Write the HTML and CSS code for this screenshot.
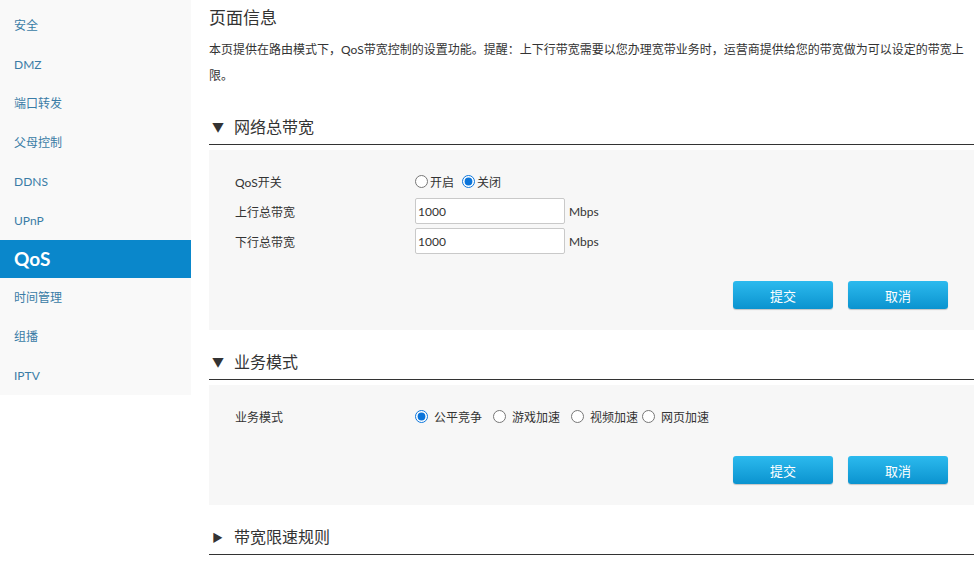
FILE: index.html
```html
<!DOCTYPE html>
<html lang="zh-CN">
<head>
<meta charset="utf-8">
<title>QoS</title>
<link rel="stylesheet" href="styles.css">
</head>
<body>
<div class="page">
  <nav class="sidebar">
    <a class="nav-item">安全</a>
    <a class="nav-item">DMZ</a>
    <a class="nav-item">端口转发</a>
    <a class="nav-item">父母控制</a>
    <a class="nav-item">DDNS</a>
    <a class="nav-item">UPnP</a>
    <a class="nav-item active">QoS</a>
    <a class="nav-item">时间管理</a>
    <a class="nav-item">组播</a>
    <a class="nav-item">IPTV</a>
  </nav>
  <main class="main">
    <h1 class="title">页面信息</h1>
    <p class="desc">本页提供在路由模式下，QoS带宽控制的设置功能。提醒：上下行带宽需要以您办理宽带业务时，运营商提供给您的带宽做为可以设定的带宽上限。</p>

    <div class="section-head first"><span class="arrow">▼</span>网络总带宽</div>
    <div class="panel">
      <div class="row">
        <span class="label">QoS开关</span>
        <span class="field">
          <label class="radio tight"><input type="radio" name="qos">开启</label>
          <label class="radio tight"><input type="radio" name="qos" checked>关闭</label>
        </span>
      </div>
      <div class="row">
        <span class="label">上行总带宽</span>
        <span class="field"><input class="text" type="text" value="1000"><span class="unit">Mbps</span></span>
      </div>
      <div class="row">
        <span class="label">下行总带宽</span>
        <span class="field"><input class="text" type="text" value="1000"><span class="unit">Mbps</span></span>
      </div>
      <div class="actions">
        <button class="btn">提交</button>
        <button class="btn">取消</button>
      </div>
    </div>

    <div class="section-head"><span class="arrow">▼</span>业务模式</div>
    <div class="panel panel2">
      <div class="row">
        <span class="label">业务模式</span>
        <span class="field">
          <label class="radio"><input type="radio" name="mode" checked>公平竞争</label>
          <label class="radio"><input type="radio" name="mode">游戏加速</label>
          <label class="radio close"><input type="radio" name="mode">视频加速</label>
          <label class="radio"><input type="radio" name="mode">网页加速</label>
        </span>
      </div>
      <div class="actions">
        <button class="btn">提交</button>
        <button class="btn">取消</button>
      </div>
    </div>

    <div class="section-head"><span class="arrow small">▶</span>带宽限速规则</div>
  </main>
</div>
</body>
</html>
```
FILE: styles.css
```css
* { box-sizing: border-box; }
html, body { margin: 0; padding: 0; background: #fff; }
body {
  font-family: "Lato", "Noto Sans CJK SC", sans-serif;
  font-size: 12px;
  color: #333;
  width: 980px;
  height: 562px;
  overflow: hidden;
}
.page { display: flex; align-items: flex-start; }
.sidebar {
  width: 191px;
  flex: none;
  background: #f9f9f9;
  padding-top: 6px;
  height: 395px;
  display: flex;
  flex-direction: column;
}
.nav-item {
  height: 39px;
  line-height: 39px;
  padding-left: 14px;
  color: #3a7ca6;
  font-size: 12px;
}
.nav-item.active {
  background: #0a87cb;
  color: #fff;
  font-weight: 700;
  font-size: 19px;
  height: 38px;
  line-height: 38px;
}
.main {
  margin-left: 18px;
  width: 765px;
  padding-top: 6px;
}
.title {
  margin: 0;
  font-size: 17px;
  font-weight: 400;
  line-height: 24px;
  color: #333;
}
.desc {
  margin: 7px 0 0;
  font-size: 12px;
  line-height: 26px;
  color: #333;
}
.section-head {
  margin-top: 14px;
  height: 36px;
  line-height: 36px;
  font-size: 16px;
  color: #333;
  border-bottom: 1px solid #333;
  padding-left: 3px;
}
.section-head.first { margin-top: 20px; }
.arrow {
  display: inline-block;
  font-size: 12px;
  width: 22px;
  vertical-align: 1px;
}
.arrow.small { font-size: 11px; }
.panel {
  margin-top: 5px;
  background: #f7f7f7;
  padding: 16px 0 21px;
}
.row {
  display: flex;
  align-items: center;
  height: 30px;
}
.label {
  width: 206px;
  padding-left: 26px;
  flex: none;
  font-size: 12px;
}
.field { display: flex; align-items: center; }
.radio {
  display: inline-flex;
  align-items: center;
  margin-right: 11px;
  font-size: 12px;
}
.radio.close { margin-right: 4px; }
.radio input {
  margin: 0 6px 0 0;
  width: 13px;
  height: 13px;
  accent-color: #0a74da;
}
.radio.tight { margin-right: 8px; }
.radio.tight input { margin-right: 2px; }
.text {
  width: 150px;
  height: 26px;
  border: 1px solid #c9c9c9;
  border-radius: 2px;
  background: #fff;
  padding: 0 2px;
  font-family: "Lato", "Noto Sans CJK SC", sans-serif;
  font-size: 12px;
  color: #333;
}
.unit { margin-left: 4px; font-size: 12px; }
.actions {
  display: flex;
  justify-content: flex-end;
  gap: 15px;
  padding-right: 26px;
  margin-top: 25px;
}
.btn {
  width: 100px;
  height: 28px;
  border: none;
  border-radius: 3px;
  background: linear-gradient(#2cbaee, #0b93cf);
  color: #fff;
  font-family: "Noto Sans CJK SC", sans-serif;
  font-size: 13px;
  box-shadow: 0 1px 1px rgba(0,0,0,0.2);
}
```
